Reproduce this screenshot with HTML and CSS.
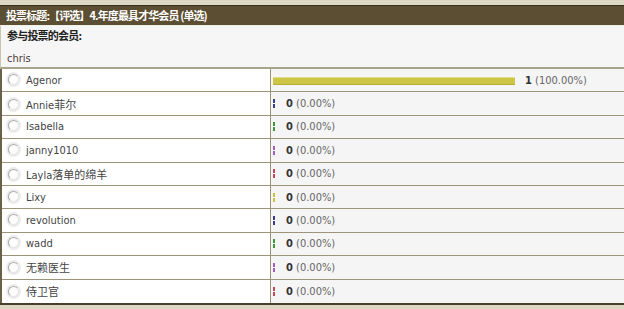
FILE: index.html
```html
<!DOCTYPE html>
<html lang="zh-CN">
<head>
    <meta charset="UTF-8">
    <title>投票</title>
    <link rel="stylesheet" href="styles.css">
</head>
<body>
    <div class="poll">
        <div class="poll-title">投票标题:【评选】4.年度最具才华会员 (单选)</div>
        <div class="voters">
            <div class="voters-label">参与投票的会员:</div>
            <div class="voters-list">chris</div>
        </div>
        <table class="options">
            <tr>
                <td class="opt"><span class="radio"></span>Agenor</td>
                <td class="res"><span class="bar full"></span><b>1</b> (100.00%)</td>
            </tr>
            <tr>
                <td class="opt"><span class="radio"></span>Annie菲尔</td>
                <td class="res"><span class="tick blue"></span><b>0</b> (0.00%)</td>
            </tr>
            <tr>
                <td class="opt"><span class="radio"></span>Isabella</td>
                <td class="res"><span class="tick green"></span><b>0</b> (0.00%)</td>
            </tr>
            <tr>
                <td class="opt"><span class="radio"></span>janny1010</td>
                <td class="res"><span class="tick purple"></span><b>0</b> (0.00%)</td>
            </tr>
            <tr>
                <td class="opt"><span class="radio"></span>Layla落单的绵羊</td>
                <td class="res"><span class="tick red"></span><b>0</b> (0.00%)</td>
            </tr>
            <tr>
                <td class="opt"><span class="radio"></span>Lixy</td>
                <td class="res"><span class="tick yellow"></span><b>0</b> (0.00%)</td>
            </tr>
            <tr>
                <td class="opt"><span class="radio"></span>revolution</td>
                <td class="res"><span class="tick blue"></span><b>0</b> (0.00%)</td>
            </tr>
            <tr>
                <td class="opt"><span class="radio"></span>wadd</td>
                <td class="res"><span class="tick green"></span><b>0</b> (0.00%)</td>
            </tr>
            <tr>
                <td class="opt"><span class="radio"></span>无赖医生</td>
                <td class="res"><span class="tick purple"></span><b>0</b> (0.00%)</td>
            </tr>
            <tr>
                <td class="opt"><span class="radio"></span>侍卫官</td>
                <td class="res"><span class="tick red"></span><b>0</b> (0.00%)</td>
            </tr>
        </table>
    </div>
</body>
</html>
```

FILE: styles.css
```css
body {
    margin: 0;
    background-color: #dcd8c4;
    font-family: 'DejaVu Sans Condensed', 'Liberation Sans', 'Noto Sans CJK SC', sans-serif;
    font-size: 11px;
    color: #333;
}
.poll {
    margin-top: 5px;
    border-bottom: 2px solid #4a3f2c;
}
.poll-title {
    background-color: #5b4e33;
    border-top: 1px solid #382e1e;
    border-bottom: 1px solid #f0efe8;
    height: 19px;
    line-height: 19px;
    padding-left: 6px;
    color: #fff;
    font-weight: bold;
    font-family: 'Noto Sans CJK SC', sans-serif;
    font-size: 11px;
    letter-spacing: -0.9px;
}
.voters {
    background-color: #f6f6f6;
    padding: 2px 6px 0 6px;
    height: 39px;
    border-bottom: 2px solid #a8a48c;
    border-left: 1px solid #c8c4b0;
}
.voters-label {
    font-weight: bold;
    font-family: 'Noto Sans CJK SC', sans-serif;
    font-size: 11px;
    letter-spacing: -0.8px;
    color: #222;
    height: 14px;
    line-height: 14px;
}
.voters-list {
    margin-top: 10px;
    color: #4a3a3a;
    line-height: 14px;
}
.options {
    width: 100%;
    border-collapse: collapse;
    border-left: 2px solid #6b6048;
}
.options td {
    height: 22.4px;
    padding: 0;
    border-bottom: 1px solid #9c9478;
    vertical-align: middle;
}
.options tr:last-child td {
    border-bottom: none;
    height: 23.4px;
}
.opt {
    width: 268px;
    background-color: #fff;
    border-right: 1px solid #9c9478;
    color: #444;
}
.res {
    background-color: #f5f5f5;
    color: #666;
    padding-left: 2px;
}
.res b {
    color: #333;
}
.radio {
    display: inline-block;
    width: 9px;
    height: 9px;
    margin: 0 7px 0 6px;
    vertical-align: -1px;
    border-radius: 50%;
    border: 1px solid #aaa;
    border-right-color: #e4e4e4;
    border-bottom-color: #e4e4e4;
    background-color: #fdfdfd;
    box-shadow: 0 0 0 2px #ececec;
}
.bar {
    display: inline-block;
    vertical-align: middle;
    height: 6px;
}
.bar.full {
    width: 242px;
    margin: 0 10px 0 2px;
    background-color: #cdc546;
    border-top: 1px solid #e3dd8a;
    border-bottom: 1px solid #b8b030;
}
.tick {
    display: inline-block;
    width: 2px;
    height: 9px;
    margin: 0 11px 0 2px;
    vertical-align: -1px;
}
.tick.blue { background: linear-gradient(#3a3f8c 40%, #fff 40%, #fff 55%, #3a3f8c 55%); }
.tick.green { background: linear-gradient(#3c9a3c 40%, #fff 40%, #fff 55%, #3c9a3c 55%); }
.tick.purple { background: linear-gradient(#a65cc0 40%, #fff 40%, #fff 55%, #a65cc0 55%); }
.tick.red { background: linear-gradient(#c0485c 40%, #fff 40%, #fff 55%, #c0485c 55%); }
.tick.yellow { background: linear-gradient(#c8c040 40%, #fff 40%, #fff 55%, #c8c040 55%); }
```
